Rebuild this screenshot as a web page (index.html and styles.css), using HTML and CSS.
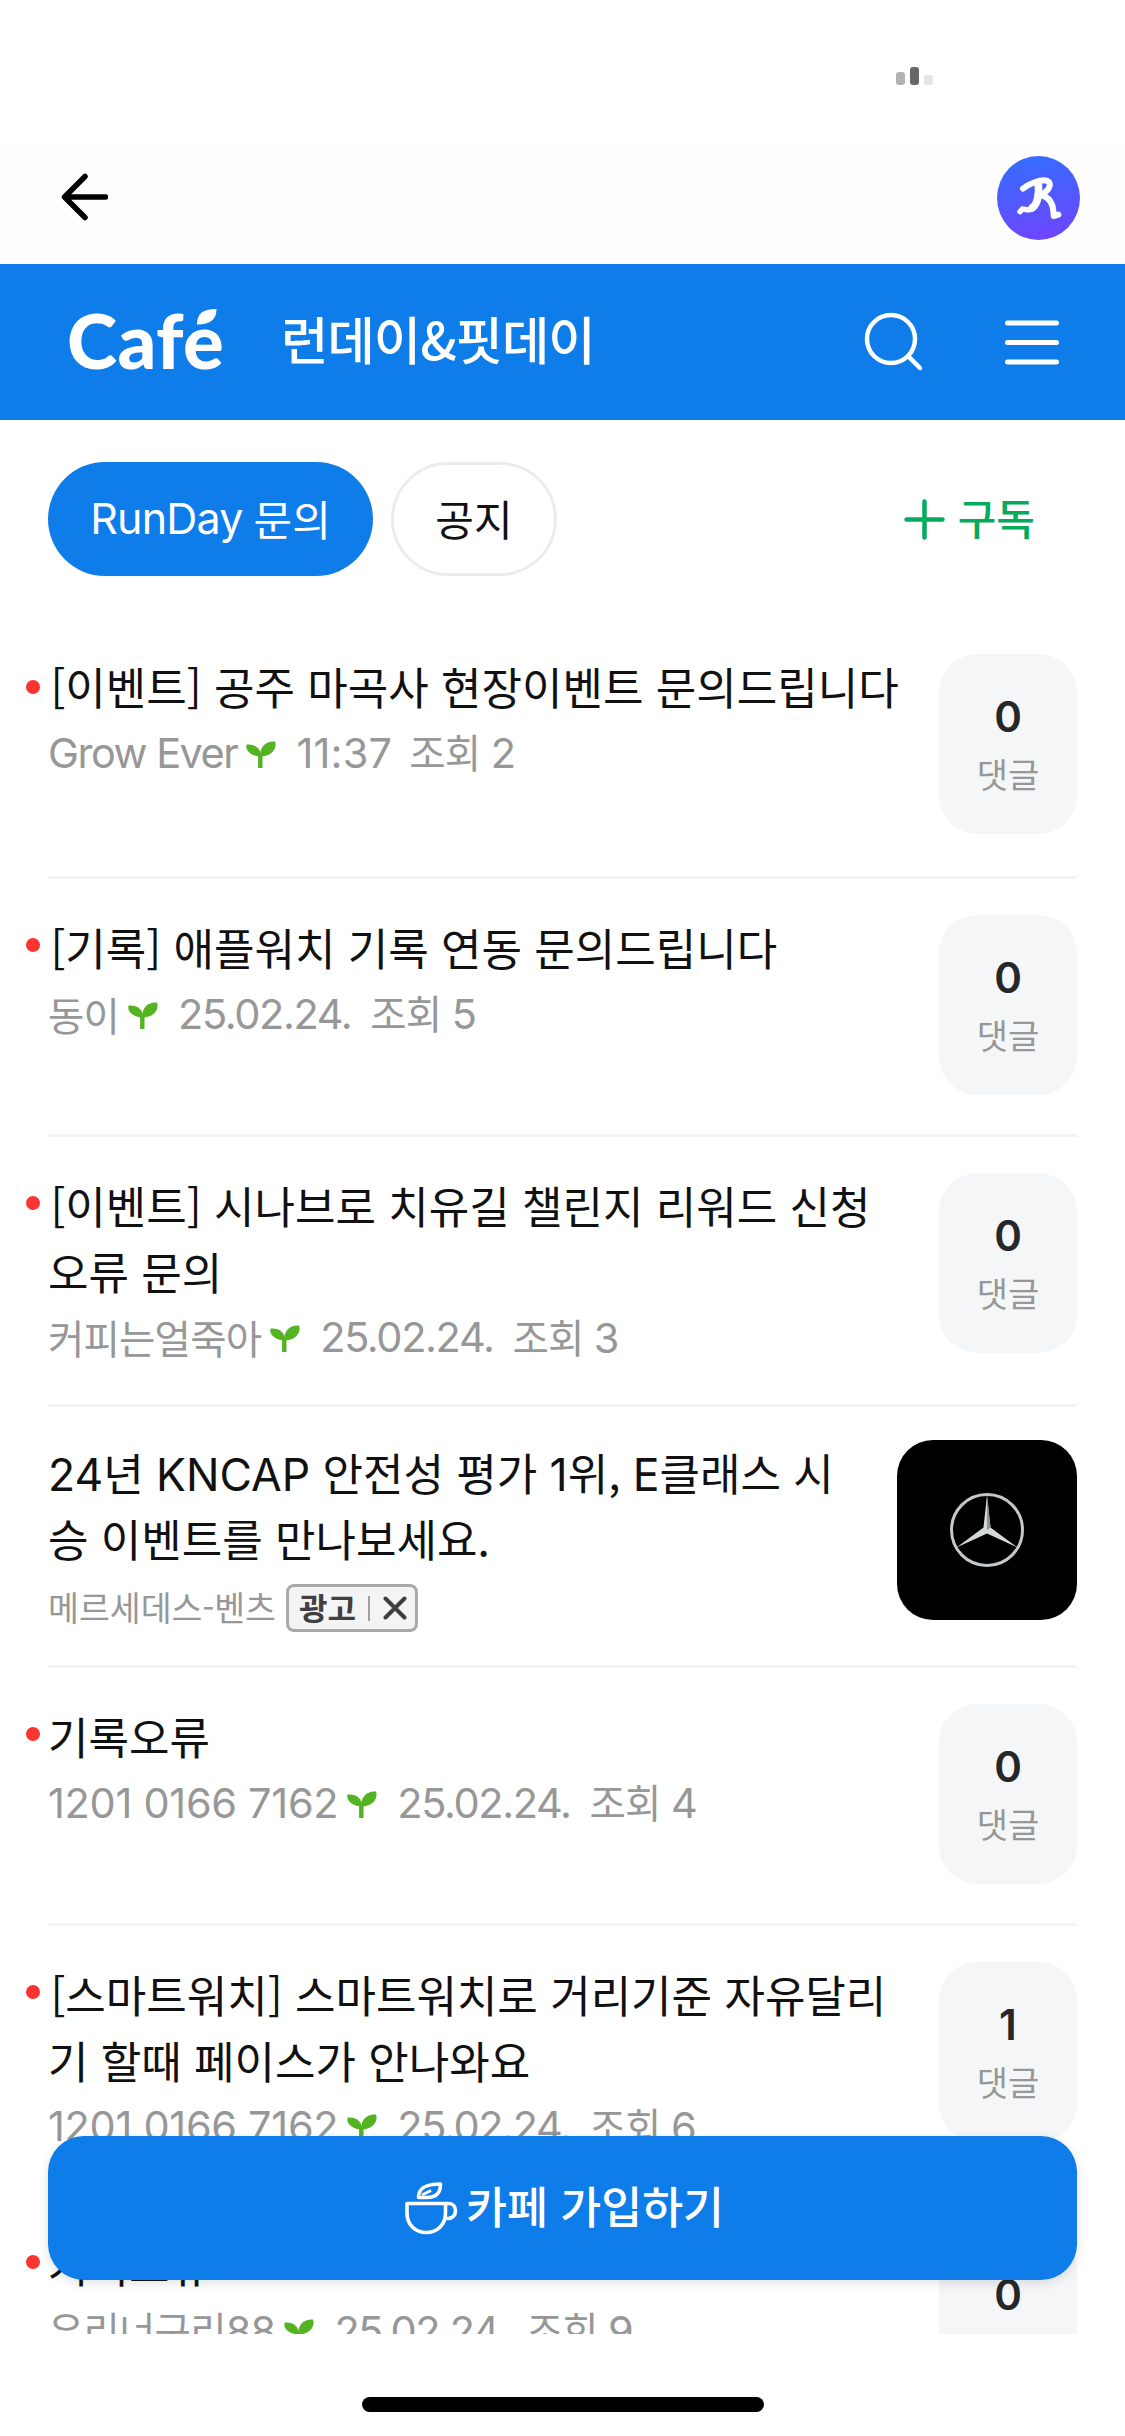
FILE: index.html
```html
<!DOCTYPE html>
<html lang="ko">
<head>
<meta charset="utf-8">
<title>런데이&amp;핏데이</title>
<link rel="stylesheet" href="styles.css">
</head>
<body>
<svg class="defs" width="0" height="0">
  <symbol id="sprout" viewBox="0 0 30 28">
    <path d="M14.300 13V27" stroke="#53b321" stroke-width="4.400" fill="none"/>
    <path d="M14.500 15.500C13 6.500 20 -.5 29 .5C31.500 8 25 15.500 14.500 15.500Z" fill="#53b321"/>
    <path d="M15 15.500C15.500 8 9 2.500 .6 3.600C-1.200 10 6 15.500 15 15.500Z" fill="#53b321"/>
  </symbol>
</svg>
<div class="screen">
  <div class="status">
    <div class="signal"><i class="bar bar-a"></i><i class="bar bar-b"></i><i class="bar bar-c"></i></div>
  </div>
  <div class="nav">
    <svg class="back" width="47" height="48" viewBox="0 0 47 48" fill="none" stroke="#000" stroke-width="5.500" stroke-linecap="round" stroke-linejoin="round"><path d="M24 3.500L3.500 24L24 44.500M4 24H44.500"/></svg>
    <svg class="avatar" width="83" height="84" viewBox="0 0 249 252">
      <defs><linearGradient id="av" x1="0" y1="0" x2="0.200" y2="1"><stop offset="0" stop-color="#3070ff"/><stop offset="1" stop-color="#6a48ff"/></linearGradient></defs>
      <ellipse cx="124.500" cy="126" rx="124.500" ry="126" fill="url(#av)"/>
      <g fill="none" stroke="#fff" stroke-linecap="round" stroke-linejoin="round">
        <path stroke-width="18" d="M78 98C98 82 125 73 142 73C168 74 162 102 132 116"/>
        <path stroke-width="23" d="M124 86C127 112 122 144 106 155"/>
        <path stroke-width="16" d="M106 158C94 166 82 158 76 159L69 167"/>
        <path stroke-width="18" d="M130 118C158 122 170 145 170 180L184 176"/>
      </g>
    </svg>
  </div>
  <header class="header">
    <div class="logo" aria-label="Café">Cafe<svg class="leaf" width="20" height="16" viewBox="0 0 20 16"><path d="M0 15.500C0 5 5 0 19.500 0C19.500 10 14 15.500 0 15.500Z" fill="#fff"/></svg></div>
    <h1 class="title">런데이&amp;핏데이</h1>
    <svg class="search" width="60" height="60" viewBox="0 0 60 60" fill="none" stroke="#fff" stroke-width="4.500" stroke-linecap="round"><circle cx="27" cy="27" r="24"/><path d="M44 44L56 56"/></svg>
    <svg class="menu" width="54" height="45" viewBox="0 0 54 45" fill="none" stroke="#fff" stroke-width="5" stroke-linecap="round"><path d="M2.500 3H51.500M2.500 22.500H51.500M2.500 42H51.500"/></svg>
  </header>
  <div class="tabs">
    <div class="chip chip-on"><span class="run">RunDay</span><span>문의</span></div>
    <div class="chip chip-off"><span>공지</span></div>
    <div class="subscribe"><svg width="41" height="41" viewBox="0 0 41 41" stroke="#05aa5b" stroke-width="4.500" stroke-linecap="round"><path d="M20.500 2.500V38.500M2.500 20.500H38.500"/></svg><span>구독</span></div>
  </div>
  <main class="list">
    <article class="item item-first">
      <i class="dot"></i>
      <div class="text"><h2 class="tagged">[이벤트] 공주 마곡사 현장이벤트 문의드립니다</h2>
        <p class="meta"><span class="name latin">Grow Ever</span><svg class="sprout"><use href="#sprout"/></svg><span class="date time">11:37</span><span class="views">조회 <b>2</b></span></p></div>
      <div class="count"><strong>0</strong><span>댓글</span></div>
    </article>
    <article class="item">
      <i class="dot"></i>
      <div class="text"><h2 class="tagged">[기록] 애플워치 기록 연동 문의드립니다</h2>
        <p class="meta"><span class="name">동이</span><svg class="sprout"><use href="#sprout"/></svg><span class="date">25.02.24.</span><span class="views">조회 <b>5</b></span></p></div>
      <div class="count"><strong>0</strong><span>댓글</span></div>
    </article>
    <article class="item item-tall">
      <i class="dot"></i>
      <div class="text"><h2 class="tagged">[이벤트] 시나브로 치유길 챌린지 리워드 신청<br>오류 문의</h2>
        <p class="meta"><span class="name">커피는얼죽아</span><svg class="sprout"><use href="#sprout"/></svg><span class="date">25.02.24.</span><span class="views">조회 <b>3</b></span></p></div>
      <div class="count"><strong>0</strong><span>댓글</span></div>
    </article>
    <article class="item item-ad">
      <div class="text"><h2><span class="lat">24</span>년 <span class="lat">KNCAP</span> 안전성 평가 <span class="lat">1</span>위, <span class="lat">E</span>클래스 시<br>승 이벤트를 만나보세요.</h2>
        <p class="sponsor"><span>메르세데스-벤츠</span><span class="badge"><span>광고</span><i class="sep"></i><svg width="24" height="24" viewBox="0 0 24 24" stroke="#404040" stroke-width="4" stroke-linecap="round"><path d="M2.500 2.500L21.500 21.500M21.500 2.500L2.500 21.500"/></svg></span></p></div>
      <div class="thumb">
        <svg width="76" height="76" viewBox="0 0 76 76"><circle cx="38" cy="38" r="35.500" fill="none" stroke="#c3c8ca" stroke-width="3"/><path d="M38 3L41.500 35.500L68.500 55.500L38 41.500L7.500 55.500L34.500 35.500Z" fill="#d6d9da"/><path d="M38 3L41.500 35.500L38 38Z" fill="#8f9496"/></svg>
      </div>
    </article>
    <article class="item">
      <i class="dot"></i>
      <div class="text"><h2>기록오류</h2>
        <p class="meta"><span class="name latin digits">1201 0166 7162</span><svg class="sprout"><use href="#sprout"/></svg><span class="date">25.02.24.</span><span class="views">조회 <b>4</b></span></p></div>
      <div class="count"><strong>0</strong><span>댓글</span></div>
    </article>
    <article class="item item-tall">
      <i class="dot"></i>
      <div class="text"><h2 class="tagged">[스마트워치] 스마트워치로 거리기준 자유달리<br>기 할때 페이스가 안나와요</h2>
        <p class="meta"><span class="name latin digits">1201 0166 7162</span><svg class="sprout"><use href="#sprout"/></svg><span class="date">25.02.24.</span><span class="views">조회 <b>6</b></span></p></div>
      <div class="count"><strong>1</strong><span>댓글</span></div>
    </article>
    <article class="item">
      <i class="dot"></i>
      <div class="text"><h2>거리오류</h2>
        <p class="meta"><span class="name">우리너구리<b>88</b></span><svg class="sprout"><use href="#sprout"/></svg><span class="date">25.02.24.</span><span class="views">조회 <b>9</b></span></p></div>
      <div class="count"><strong>0</strong><span>댓글</span></div>
    </article>
  </main>
  <div class="join">
    <svg width="53" height="53" viewBox="0 0 53 53" fill="none" stroke="#fff" stroke-width="3.600" stroke-linejoin="round"><path d="M2 21.500H40.500V31C40.500 43 32 50.500 21.200 50.500C10.500 50.500 2 43 2 31Z"/><path d="M40.500 21.500H44C48 21.500 50.500 25 50.500 29C50.500 33 47.500 36.500 43 36.500H39.500"/><path d="M13.500 15.500C13.500 7 19 2 35.500 2C35.500 10 32 15.500 22 15.500Z"/><path d="M17 13L26 8.500" stroke-width="3"/></svg>
    <span>카페 가입하기</span>
  </div>
  <footer class="bottom"><i class="home"></i></footer>
</div>
</body>
</html>
```

FILE: styles.css
```css
* { box-sizing: border-box; margin: 0; padding: 0; }
body { background: #fff; font-family: Inter, "Noto Sans CJK KR", sans-serif; }
i, b { font-style: normal; font-weight: inherit; }
svg { display: block; flex: none; }
.defs { position: absolute; }
.screen { position: relative; width: 1125px; height: 2436px; overflow: hidden; display: flex; flex-direction: column; background: #fff; }

.status { height: 144px; padding: 67px 192px 0 0; display: flex; justify-content: flex-end; }
.signal { display: flex; align-items: flex-end; gap: 5px; height: 18px; }
.bar { width: 9px; border-radius: 3px; }
.bar-a { height: 13px; background: #b2b2b2; }
.bar-b { height: 18px; background: #666; }
.bar-c { height: 10px; background: #e6e6e6; }

.nav { height: 120px; padding: 12px 45px 0 61px; display: flex; justify-content: space-between; align-items: flex-start; background: #fefefe; }
.back { margin-top: 17px; }

.header { height: 156px; flex: none; background: #0e7ce9; display: flex; align-items: center; color: #fff; padding: 0 66px 0 67px; }
.logo { position: relative; width: 214px; padding-bottom: 5px; font: 900 76px/80px Lato, sans-serif; letter-spacing: 0.4px; }
.leaf { position: absolute; left: 130px; top: 9px; }
.title { flex: 1; padding-bottom: 8px; font: 500 51.5px/80px "Noto Sans CJK KR", sans-serif; letter-spacing: -1px; white-space: nowrap; }
.search { margin: 0 81px 0 0; }

.tabs { height: 198px; flex: none; padding: 42px 90px 0 48px; display: flex; align-items: flex-start; }
.chip { height: 114px; padding-bottom: 3px; border-radius: 57px; display: flex; align-items: center; justify-content: center; font: 400 42px/60px "Noto Sans CJK KR", sans-serif; }
.chip-on { width: 325px; gap: 11px; background: #0e7ce9; color: #fff; }
.run { font-family: Inter, sans-serif; font-size: 43px; letter-spacing: -0.8px; }
.chip-off { width: 166px; margin-left: 18px; border: 3px solid #ebecee; color: #111; }
.subscribe { height: 114px; margin-left: auto; display: flex; align-items: center; gap: 13px; color: #05aa5b; font: 500 42px/60px "Noto Sans CJK KR", sans-serif; }
.subscribe span { margin-bottom: 4px; }

.list { height: 1716px; flex: none; overflow: hidden; }
.item { position: relative; height: 258px; margin: 0 48px; padding-top: 36px; border-bottom: 3px solid #f4f4f5; display: flex; justify-content: space-between; align-items: flex-start; }
.item-first { height: 261px; }
.item-tall { height: 270px; }
.item-ad { height: 261px; padding-top: 33px; }
.dot { position: absolute; left: -22px; top: 59px; width: 14px; height: 14px; border-radius: 50%; background: #fa3432; }
.item-first .dot { top: 62px; }
.text { flex: 1; }
h2 { font: 400 44px/65.5px "Noto Sans CJK KR", sans-serif; color: #111; white-space: nowrap; }
.tagged { text-indent: 2.5px; }
.lat { font-family: Inter, sans-serif; line-height: 1; font-size: 44.5px; }
.meta { display: flex; height: 65px; align-items: center; font: 400 39.5px/65px "Noto Sans CJK KR", sans-serif; color: #979797; white-space: nowrap; letter-spacing: -0.8px; }
.meta b, .date, .latin { font-family: Inter, sans-serif; font-size: 41.5px; }
.date, .latin { padding-top: 2px; }
.latin { letter-spacing: -1.5px; }
.digits { letter-spacing: -0.3px; }
.date { letter-spacing: -1.4px; margin-right: 19px; }
.time { letter-spacing: 0.2px; margin-right: 17px; }
.sprout { width: 30px; height: 28px; margin: 5px 20px 0 9px; }
.count { width: 138px; height: 180px; border-radius: 38px; background: #f4f6f8; display: flex; flex-direction: column; align-items: center; padding-top: 38px; }
.count strong { font: 600 42px/50px Inter, sans-serif; color: #252729; }
.count span { font: 400 34px/40px "Noto Sans CJK KR", sans-serif; color: #979797; margin-top: 12px; }

.item-ad h2 { word-spacing: 0; }
.sponsor { display: flex; align-items: center; gap: 10px; height: 48px; margin-top: 13px; font: 400 33.6px/48px "Noto Sans CJK KR", sans-serif; color: #979797; white-space: nowrap; }
.sponsor > span:first-child { margin-bottom: 3px; }
.badge { width: 132px; height: 48px; border: 3px solid #a9a9a9; border-radius: 8px; background: #f4f4f4; color: #404040; font-weight: 700; font-size: 31px; line-height: 40px; display: flex; align-items: center; padding-left: 10px; }
.badge span { margin-bottom: 2px; }
.sep { width: 2px; height: 25px; background: #a0a0a0; margin: 0 13px 0 12px; }
.thumb { width: 180px; height: 180px; border-radius: 36px; background: #000; display: flex; align-items: center; justify-content: center; }

.join { position: absolute; left: 48px; top: 2136px; width: 1029px; height: 144px; padding-left: 4px; border-radius: 36px; background: #0e7ce9; color: #fff; display: flex; align-items: center; justify-content: center; gap: 8px; font: 500 44.5px/60px "Noto Sans CJK KR", sans-serif; box-shadow: 0 3px 12px rgba(0,0,0,.12); }
.join span { margin-bottom: 6px; }
.bottom { flex: 1; background: #fff; display: flex; justify-content: center; padding-top: 63px; }
.home { width: 402px; height: 15px; border-radius: 8px; background: #000; }
```
